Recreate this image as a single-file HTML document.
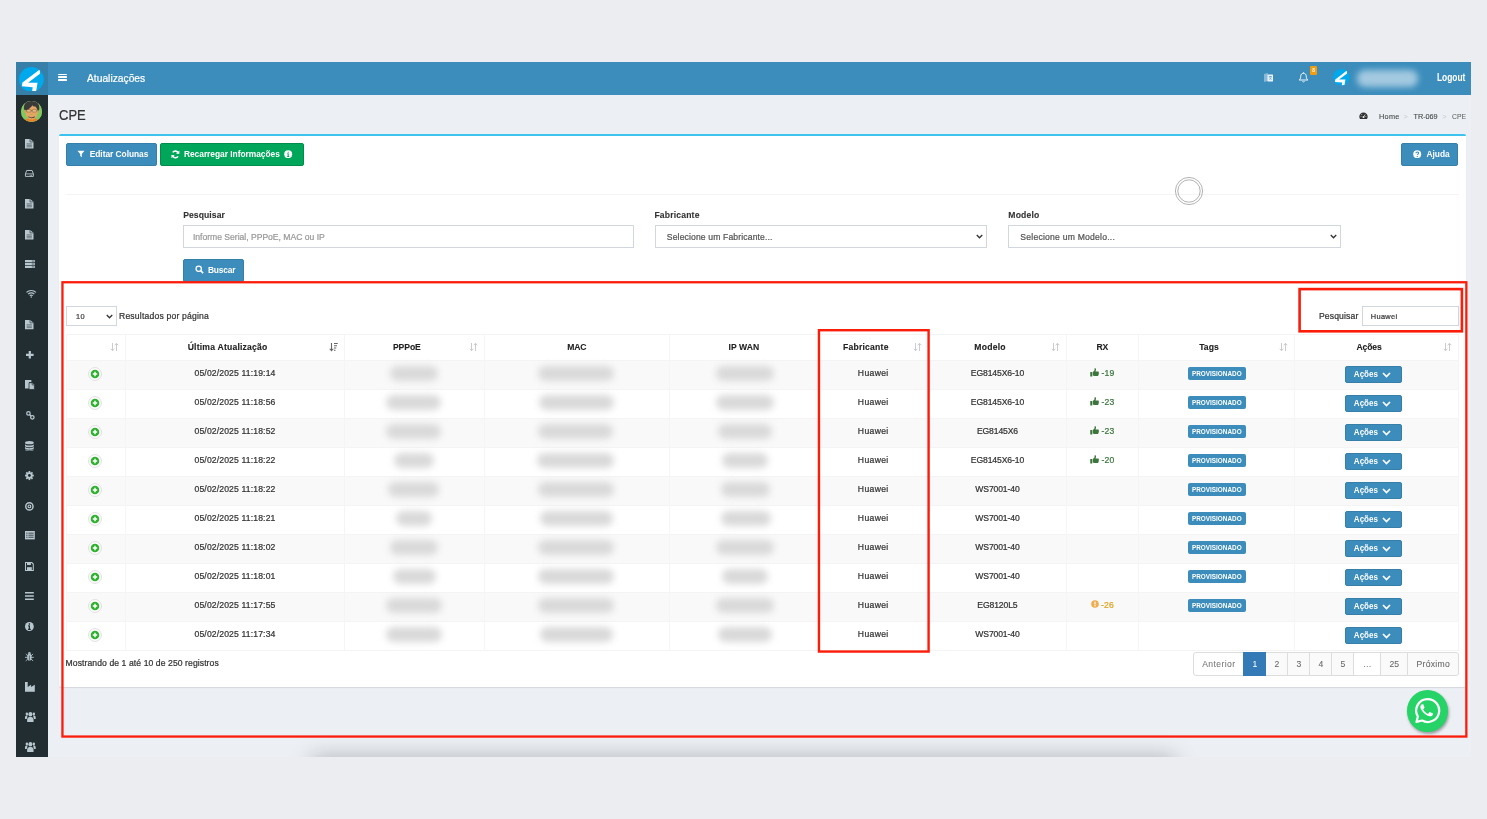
<!DOCTYPE html>
<html lang="pt-br"><head><meta charset="utf-8"><title>CPE</title>
<style>
*{box-sizing:border-box}
html,body{margin:0;padding:0;background:#ebedf1}
body{width:1487px;height:819px;overflow:hidden;position:relative;background:#ebedf1;font-family:"Liberation Sans",sans-serif;font-size:8.6px;color:#333}
.abs{position:absolute}
.t{white-space:nowrap;-webkit-text-stroke:0.22px currentColor}
.btn .t,.logout .t,.badge .t,.abtn .t,.pb.act .t{-webkit-text-stroke:0}
.th .t,.lbl .t{-webkit-text-stroke:0.1px currentColor}
.pb .t{-webkit-text-stroke:0.06px currentColor}
#page{position:absolute;left:16px;top:62px;width:1455px;height:695px;background:#ecf0f5;overflow:hidden;will-change:transform}
#o{position:absolute;left:-16px;top:-62px;width:1487px;height:819px}
#shadow{position:absolute;left:313px;top:758px;width:861px;height:30px;box-shadow:0 0 22px 1px rgba(0,0,0,.26);background:#ddd}
#hdr{position:absolute;left:16px;top:62px;width:1455px;height:32.7px;background:#3c8dbc}
#logo{position:absolute;left:16px;top:62px;width:32px;height:32.7px;background:#367fa9}
#logo svg{position:absolute;left:3px;top:4.7px}
#side{position:absolute;left:16px;top:94.7px;width:32px;height:662px;background:#222d32}
.sic{position:absolute;line-height:0}
#avatar{position:absolute;left:20.5px;top:101.4px;width:21.2px;height:20.8px;border-radius:50%;overflow:hidden;background:#8cc152;line-height:0}
.htitle{position:absolute;left:87px;top:72px;-webkit-text-stroke:0.25px #fff;color:#fff;font-size:11.2px;line-height:13px;white-space:nowrap}
.burger{position:absolute;left:58.3px;top:73.6px;width:9px;height:8px}
.burger i{position:absolute;left:0;width:9px;height:1.7px;background:#fff;border-radius:.4px}
.logout{position:absolute;left:1436.5px;top:72.2px;color:#fff;font-size:10px;font-weight:bold;line-height:12px;white-space:nowrap}
h1{position:absolute;left:58.6px;top:105.5px;margin:0;font-weight:normal;font-size:15.3px;line-height:18px;color:#333;white-space:nowrap}
.bc .t{-webkit-text-stroke:0.08px currentColor}
.bc{position:absolute;top:112px;font-size:7.3px;line-height:10px;color:#444;white-space:nowrap}
#box{position:absolute;left:59.3px;top:134.2px;width:1406.7px;height:552.5px;background:#fff;border-top:2px solid #3cc3ee;border-radius:2px;box-shadow:0 1px 1px rgba(0,0,0,.1)}
.btn{position:absolute;height:23px;border-radius:2px;color:#fff;font-weight:bold;font-size:8.4px;line-height:21.8px;white-space:nowrap;border:1px solid #367fa9;background:#3c8dbc}
.btn.green{background:#00a65a;border-color:#008d4c}
.btn svg{vertical-align:middle;position:relative;top:-0.6px}
.hr{position:absolute;left:66px;top:193.5px;width:1392.6px;height:1px;background:#f4f4f4}
.lbl{position:absolute;top:209.2px;font-weight:bold;font-size:8.6px;line-height:12px;color:#333;white-space:nowrap}
.inp{position:absolute;top:224.7px;height:23.4px;border:1px solid #d2d6de;background:#fff;font-size:8.6px;line-height:23.2px;color:#555;white-space:nowrap}
.inp svg{position:absolute;right:2.8px;top:8.4px}
#dt{position:absolute;left:66px;top:334px;width:1392.6px;height:318px}
.th{position:absolute;top:0;height:26.3px;text-align:center;font-weight:bold;line-height:27.2px;white-space:nowrap;color:#222}
.sorti{position:absolute;right:6.4px;top:8px;line-height:0}
.tr{position:absolute;left:0;width:1392.6px;height:29px;border-top:1px solid #f4f4f4}
.tr.odd{background:#f9f9f9}
.td{position:absolute;top:0;height:28px;text-align:center;line-height:24.6px;white-space:nowrap;color:#333}
.vl{position:absolute;top:0;width:1px;height:316.5px;background:#f5f5f5}
.hl{position:absolute;left:0;width:1392.6px;height:1px;background:#f4f4f4}
.blob{position:absolute;top:4.8px;height:15.2px;border-radius:8px;background:#d9d9d9;filter:blur(3.8px)}
.badge{display:inline-block;vertical-align:top;margin-top:6px;height:13.2px;line-height:14px;padding:0 4.2px;border-radius:2px;background:#3c8dbc;color:#fff;font-weight:bold;font-size:6.9px;position:relative;left:0.6px}
.abtn{display:inline-block;vertical-align:top;margin-top:5px;width:57px;height:16.9px;line-height:15.3px;text-align:left;padding-left:7.6px;border-radius:2px;background:#3c8dbc;border:1px solid #367fa9;color:#fff;font-weight:bold;font-size:8.6px;position:relative;left:-2.6px}
.abtn svg{vertical-align:middle;position:relative;top:-0.4px}
.gap{display:inline-block;width:2.4px}
.gap2{display:inline-block;width:3.8px}
.rx svg{vertical-align:middle;position:relative;top:-2px}
.rx.g{color:#3c763d}
.rx.w{color:#e0a21c}
.pg{display:inline-block;vertical-align:top;margin-top:6.3px;line-height:0;position:relative;left:-0.3px;top:-0.6px}
.pb{position:absolute;top:0;height:23.6px;border:1px solid #ddd;background:#fafafa;color:#666;text-align:center;line-height:22.6px;font-size:8.6px}
.pb.act{background:#337ab7;border-color:#337ab7;color:#fff;z-index:2}
.pb.dis{background:#fff;color:#777}
.pb.first{border-radius:3px 0 0 3px}
.pb.last{border-radius:0 3px 3px 0}
.red{position:absolute;border:2.4px solid #fb1d0b;pointer-events:none}
</style></head>
<body>
<div id="page"><div id="o">
  <div id="shadow"></div>
  <div id="hdr"></div>
  <div id="logo"><svg width="24.8" height="24.8" viewBox="0 0 100 100" style=""><clipPath id="lc1"><circle cx="50" cy="50" r="50"/></clipPath><circle cx="50" cy="50" r="50" fill="#00a8ec"/><path clip-path="url(#lc1)" d="M83.8 9.7 L13.8 62.8 L11.4 77.6 L55.2 82 L52.6 101 L69.3 97 L74.8 63.8 L36.5 64 L84.5 27.6 Z" fill="#fff"/></svg></div>
  <div class="burger"><i style="top:0.2px"></i><i style="top:2.9px"></i><i style="top:5.6px"></i></div>
  <div class="htitle"><span class="t" style="display:inline-block;transform:scaleX(0.9174);transform-origin:left center;margin-right:-5.24px;">Atualizações</span></div>
  <div class="abs" style="left:1262.5px;top:71.7px;line-height:0"><svg width="11" height="11" viewBox="0 0 22 22" style=""><path d="M2 4l8-2v16l-8 2z" fill="#d7e6f1" opacity=".5"/><rect x="9" y="5" width="11" height="14" rx="1" fill="#eaf3f9"/><path d="M11.500 9h6M14.500 8v1.200M12.500 15c2.500-1.500 3.800-3.500 4.200-6M13 11c1 2 2.500 3.200 4.500 4" stroke="#3c8dbc" stroke-width="1.200" fill="none"/></svg></div>
  <div class="abs" style="left:1297.6px;top:71.9px;line-height:0"><svg width="11" height="11" viewBox="0 0 22 22" style=""><path d="M11 2.600c-3.600 0-5.600 2.800-5.600 6.200 0 4.200-1.400 5.800-3 7.200h17.200c-1.600-1.400-3-3-3-7.200 0-3.400-2-6.200-5.600-6.200z" fill="none" stroke="#fff" stroke-width="1.900" stroke-linejoin="round"/><path d="M8.800 18.200a2.300 2.300 0 0 0 4.400 0" fill="none" stroke="#fff" stroke-width="1.500"/><path d="M11 0.800v2" stroke="#fff" stroke-width="1.800"/></svg></div>
  <div class="abs" style="left:1310px;top:66px;width:7.4px;height:8.7px;border-radius:1.2px;background:#f39c12;color:#fff;font-size:4.8px;font-weight:bold;line-height:9.4px;text-align:center">8</div>
  <div class="abs" style="left:1333px;top:69px;line-height:0"><svg width="16.6" height="16.6" viewBox="0 0 100 100" style=""><clipPath id="lc2"><circle cx="50" cy="50" r="50"/></clipPath><circle cx="50" cy="50" r="50" fill="#00a8ec"/><path clip-path="url(#lc2)" d="M83.8 9.7 L13.8 62.8 L11.4 77.6 L55.2 82 L52.6 101 L69.3 97 L74.8 63.8 L36.5 64 L84.5 27.6 Z" fill="#fff"/></svg></div>
  <div class="abs" style="left:1357px;top:70.2px;width:61px;height:16.6px;border-radius:8px;background:#a3c9e0;filter:blur(3px)"></div>
  <div class="logout"><span class="t" style="display:inline-block;transform:scaleX(0.8384);transform-origin:left center;margin-right:-5.48px;">Logout</span></div>

  <div id="side"></div>
  <div id="avatar"><svg width="21.2" height="20.8" viewBox="0 0 40 40" style=""><rect width="40" height="40" fill="#80c860"/><path d="M5 40c1-5 6-7.500 15-7.500s14 2.500 15 7.500z" fill="#e8832a"/><ellipse cx="8.500" cy="20" rx="2.200" ry="3.200" fill="#d99a5c"/><ellipse cx="31.500" cy="20" rx="2.200" ry="3.200" fill="#d99a5c"/><path d="M8.500 17c0-8 5-12 11.500-12s11.500 4 11.500 12v5c0 8-5 13.500-11.500 13.500s-11.500-5.500-11.500-13.500z" fill="#e2a665"/><path d="M5.500 17c-2-10.500 4.500-18 14.500-18s16.500 7.500 14.500 18c-1 1.200-2 2-2.500 2-1-4-3.500-7.500-5.500-9-1.500 1-3.500.5-4.500-2-2 3.500-7.500 6-9.500 11-1.500 0-3.500-.5-5-2z" fill="#3b3a3a"/><rect x="10.500" y="16.800" width="8.200" height="4.200" rx="0.800" fill="#f0c896" stroke="#7a5530" stroke-width="1"/><rect x="21.300" y="16.800" width="8.200" height="4.200" rx="0.800" fill="#f0c896" stroke="#7a5530" stroke-width="1"/><path d="M18.700 18.300h2.600" stroke="#7a5530" stroke-width="1"/><path d="M14.500 29.500c2 2.800 9 2.800 11 0l.8 1.500c-2.500 3-10 3-12.600 0z" fill="#3b3a3a"/><ellipse cx="20" cy="26" rx="1.600" ry="1" fill="#cf935a"/></svg></div>
<div class="sic" style="left:25.4px;top:139.1px;width:8.5px;height:9.5px"><svg width="8.5" height="9.5" viewBox="2.5 0.5 11 15" preserveAspectRatio="none" style="overflow:visible"><path d="M2.5 0.5h6.6l4.4 4.4v10.600h-11z" fill="#b8c7ce"/><path d="M9 0.5v4.600h4.500" fill="none" stroke="#222d32" stroke-width="0.9"/><path d="M4.600 8.200h6.800M4.600 10.500h6.800M4.600 12.800h6.800" stroke="#222d32" stroke-width="0.9" opacity=".8"/></svg></div>
<div class="sic" style="left:25.4px;top:170.3px;width:8.8px;height:6.9px"><svg width="8.8" height="6.9" viewBox="0.2 2.7 15.6 11.1" preserveAspectRatio="none" style="overflow:visible"><path d="M3.2 3.5h9.6l2.2 5.5v4h-14v-4z" fill="none" stroke="#b8c7ce" stroke-width="1.6" stroke-linejoin="round"/><path d="M1 9h14" stroke="#b8c7ce" stroke-width="1.4"/><circle cx="11.8" cy="11.2" r="0.9" fill="#b8c7ce"/><circle cx="9.3" cy="11.2" r="0.9" fill="#b8c7ce"/></svg></div>
<div class="sic" style="left:25.4px;top:199.3px;width:8.5px;height:9.5px"><svg width="8.5" height="9.5" viewBox="2.5 0.5 11 15" preserveAspectRatio="none" style="overflow:visible"><path d="M2.5 0.5h6.6l4.4 4.4v10.600h-11z" fill="#b8c7ce"/><path d="M9 0.5v4.600h4.500" fill="none" stroke="#222d32" stroke-width="0.9"/><path d="M4.600 8.200h6.800M4.600 10.500h6.800M4.600 12.800h6.800" stroke="#222d32" stroke-width="0.9" opacity=".8"/></svg></div>
<div class="sic" style="left:25.4px;top:229.5px;width:8.5px;height:9.5px"><svg width="8.5" height="9.5" viewBox="2.5 0.5 11 15" preserveAspectRatio="none" style="overflow:visible"><path d="M2.5 0.5h6.6l4.4 4.4v10.600h-11z" fill="#b8c7ce"/><path d="M9 0.5v4.600h4.500" fill="none" stroke="#222d32" stroke-width="0.9"/><path d="M4.600 8.200h6.800M4.600 10.500h6.800M4.600 12.800h6.800" stroke="#222d32" stroke-width="0.9" opacity=".8"/></svg></div>
<div class="sic" style="left:25.4px;top:260.0px;width:9.8px;height:8.0px"><svg width="9.8" height="8.0" viewBox="0.5 1.5 15 13" preserveAspectRatio="none" style="overflow:visible"><rect x="0.5" y="1.5" width="15" height="3.6" fill="#b8c7ce"/><rect x="0.5" y="6.2" width="15" height="3.6" fill="#b8c7ce"/><rect x="0.5" y="10.9" width="15" height="3.6" fill="#b8c7ce"/><path d="M11 3.3h3M11 8h3M11 12.7h3" stroke="#222d32" stroke-width="1.1"/></svg></div>
<div class="sic" style="left:25.8px;top:290.3px;width:10.5px;height:7.8px"><svg width="10.5" height="7.8" viewBox="0 2.4 16 12.4" preserveAspectRatio="none" style="overflow:visible"><path d="M0.8 6.2a10.2 10.2 0 0 1 14.4 0" fill="none" stroke="#b8c7ce" stroke-width="1.9"/><path d="M3.3 8.9a6.6 6.6 0 0 1 9.4 0" fill="none" stroke="#b8c7ce" stroke-width="1.9"/><path d="M5.8 11.4a3.1 3.1 0 0 1 4.4 0" fill="none" stroke="#b8c7ce" stroke-width="1.9"/><circle cx="8" cy="13.6" r="1.2" fill="#b8c7ce"/></svg></div>
<div class="sic" style="left:25.4px;top:319.9px;width:8.5px;height:9.3px"><svg width="8.5" height="9.3" viewBox="2.5 0.5 11 15" preserveAspectRatio="none" style="overflow:visible"><path d="M2.5 0.5h6.6l4.4 4.4v10.600h-11z" fill="#b8c7ce"/><path d="M9 0.5v4.600h4.500" fill="none" stroke="#222d32" stroke-width="0.9"/><path d="M4.600 8.200h6.800M4.600 10.500h6.800M4.600 12.800h6.800" stroke="#222d32" stroke-width="0.9" opacity=".8"/></svg></div>
<div class="sic" style="left:25.8px;top:351.1px;width:7.6px;height:7.6px"><svg width="7.6" height="7.6" viewBox="2.5 2.5 11 11" preserveAspectRatio="none" style="overflow:visible"><path d="M8 2.5v11M2.5 8h11" stroke="#b8c7ce" stroke-width="3.2"/></svg></div>
<div class="sic" style="left:25.4px;top:380.0px;width:9.8px;height:9.8px"><svg width="9.8" height="9.8" viewBox="1 1.5 14.6 14.5" preserveAspectRatio="none" style="overflow:visible"><path d="M1 1.5h9.5v3H7v9.5H1z" fill="#b8c7ce"/><path d="M7 5.5h5l3 3v7H7z" fill="#b8c7ce" stroke="#222d32" stroke-width="1.1"/><path d="M11.6 5.8v3h3" fill="none" stroke="#222d32" stroke-width="0.9"/></svg></div>
<div class="sic" style="left:25.8px;top:410.6px;width:8.8px;height:8.8px"><svg width="8.8" height="8.8" viewBox="1.2 1.2 13.6 13.6" preserveAspectRatio="none" style="overflow:visible"><circle cx="5" cy="5" r="2.7" fill="none" stroke="#b8c7ce" stroke-width="1.9"/><circle cx="11" cy="11" r="2.7" fill="none" stroke="#b8c7ce" stroke-width="1.9"/><path d="M6.6 6.6l2.8 2.8" stroke="#b8c7ce" stroke-width="1.9"/></svg></div>
<div class="sic" style="left:25.4px;top:440.8px;width:8.8px;height:10.1px"><svg width="8.8" height="10.1" viewBox="2 0.8 12 14.6" preserveAspectRatio="none" style="overflow:visible"><ellipse cx="8" cy="3.2" rx="6" ry="2.4" fill="#b8c7ce"/><path d="M2 5.2c0 3 12 3 12 0v2.4c0 3-12 3-12 0z" fill="#b8c7ce"/><path d="M2 8.9c0 3 12 3 12 0v2.4c0 3-12 3-12 0z" fill="#b8c7ce"/><path d="M2 12.5c0 3 12 3 12 0v0.6c0 3-12 3-12 0z" fill="#b8c7ce"/></svg></div>
<div class="sic" style="left:25.4px;top:471.1px;width:8.8px;height:9.1px"><svg width="8.8" height="9.1" viewBox="0.8 0.8 14.4 14.4" preserveAspectRatio="none" style="overflow:visible"><rect x="6.6" y="0.8" width="2.8" height="14.4" fill="#b8c7ce" transform="rotate(0 8 8)"/><rect x="6.6" y="0.8" width="2.8" height="14.4" fill="#b8c7ce" transform="rotate(45 8 8)"/><rect x="6.6" y="0.8" width="2.8" height="14.4" fill="#b8c7ce" transform="rotate(90 8 8)"/><rect x="6.6" y="0.8" width="2.8" height="14.4" fill="#b8c7ce" transform="rotate(135 8 8)"/><circle cx="8" cy="8" r="5.2" fill="#b8c7ce"/><circle cx="8" cy="8" r="2.3" fill="#222d32"/></svg></div>
<div class="sic" style="left:25.4px;top:501.7px;width:8.8px;height:8.8px"><svg width="8.8" height="8.8" viewBox="1.2 1.2 13.6 13.6" preserveAspectRatio="none" style="overflow:visible"><circle cx="8" cy="8" r="5.600" fill="none" stroke="#b8c7ce" stroke-width="2.300"/><circle cx="8" cy="8" r="2.100" fill="none" stroke="#b8c7ce" stroke-width="1.800"/></svg></div>
<div class="sic" style="left:25.4px;top:531.0px;width:9.8px;height:8.4px"><svg width="9.8" height="8.4" viewBox="0.8 1.8 14.4 12.4" preserveAspectRatio="none" style="overflow:visible"><rect x="0.8" y="1.8" width="14.4" height="12.4" fill="#b8c7ce"/><path d="M2.5 5h2M5.8 5h7.7M2.5 8h2M5.8 8h7.7M2.5 11h2M5.8 11h7.7" stroke="#222d32" stroke-width="1.2"/></svg></div>
<div class="sic" style="left:25.4px;top:561.8px;width:8.8px;height:9.1px"><svg width="8.8" height="9.1" viewBox="0.65 0.65 14.7 14.7" preserveAspectRatio="none" style="overflow:visible"><path d="M1.5 1.5h10.5l2.5 2.5v10.5h-13z" fill="none" stroke="#b8c7ce" stroke-width="1.7"/><rect x="4" y="2" width="6.5" height="3.6" fill="#b8c7ce"/><rect x="4" y="9" width="8" height="5" fill="#b8c7ce"/></svg></div>
<div class="sic" style="left:25.4px;top:592.1px;width:8.8px;height:8.1px"><svg width="8.8" height="8.1" viewBox="1 2 14 12" preserveAspectRatio="none" style="overflow:visible"><path d="M1 3.2h14M1 8h14M1 12.8h14" stroke="#b8c7ce" stroke-width="2.4"/></svg></div>
<div class="sic" style="left:25.4px;top:622.0px;width:8.8px;height:9.0px"><svg width="8.8" height="9.0" viewBox="1 1 14 14" preserveAspectRatio="none" style="overflow:visible"><circle cx="8" cy="8" r="7" fill="#b8c7ce"/><path d="M8 3v2.2M8 6.6v6.2M6 6.9h2M5.8 12.6h4.4" stroke="#222d32" stroke-width="2"/></svg></div>
<div class="sic" style="left:25.4px;top:652.0px;width:8.8px;height:9.3px"><svg width="8.8" height="9.3" viewBox="0.8 1.6 14.4 13.4" preserveAspectRatio="none" style="overflow:visible"><ellipse cx="8" cy="9.3" rx="3.6" ry="5" fill="#b8c7ce"/><path d="M5.4 4.2a2.6 2.6 0 0 1 5.2 0z" fill="#b8c7ce"/><path d="M0.8 9.3h14.4M2 4.5l3.4 2.6M14 4.5l-3.4 2.6M2 14.5l3.4-2.8M14 14.5l-3.4-2.8" stroke="#b8c7ce" stroke-width="1.3"/><path d="M8 6.5v7.5" stroke="#222d32" stroke-width="0.9"/></svg></div>
<div class="sic" style="left:25.4px;top:681.8px;width:9.8px;height:9.8px"><svg width="9.8" height="9.8" viewBox="0.5 1 14.5 14.5" preserveAspectRatio="none" style="overflow:visible"><path d="M0.5 1h4v7.5l5-3.5v3.5l5.5-3.5v10.5h-14.5z" fill="#b8c7ce"/></svg></div>
<div class="sic" style="left:25.4px;top:712.1px;width:10.7px;height:10.0px"><svg width="10.7" height="10.0" viewBox="0 1.7 16 13.1" preserveAspectRatio="none" style="overflow:visible"><circle cx="8" cy="4.6" r="2.9" fill="#b8c7ce"/><path d="M3.2 14.8v-3.3a3.3 3.3 0 0 1 3.3-3.3h3a3.3 3.3 0 0 1 3.3 3.3v3.3z" fill="#b8c7ce"/><circle cx="2.8" cy="4.3" r="1.9" fill="#b8c7ce"/><circle cx="13.2" cy="4.3" r="1.9" fill="#b8c7ce"/><path d="M0 11v-2.3a2.3 2.3 0 0 1 2.3-2.3h1.6l-1.3 4.6zM16 11v-2.3a2.3 2.3 0 0 0-2.3-2.3h-1.6l1.3 4.6z" fill="#b8c7ce"/></svg></div>
<div class="sic" style="left:25.4px;top:742.2px;width:10.7px;height:10.0px"><svg width="10.7" height="10.0" viewBox="0 1.7 16 13.1" preserveAspectRatio="none" style="overflow:visible"><circle cx="8" cy="4.6" r="2.9" fill="#b8c7ce"/><path d="M3.2 14.8v-3.3a3.3 3.3 0 0 1 3.3-3.3h3a3.3 3.3 0 0 1 3.3 3.3v3.3z" fill="#b8c7ce"/><circle cx="2.8" cy="4.3" r="1.9" fill="#b8c7ce"/><circle cx="13.2" cy="4.3" r="1.9" fill="#b8c7ce"/><path d="M0 11v-2.3a2.3 2.3 0 0 1 2.3-2.3h1.6l-1.3 4.6zM16 11v-2.3a2.3 2.3 0 0 0-2.3-2.3h-1.6l1.3 4.6z" fill="#b8c7ce"/></svg></div>
  <h1><span class="t" style="display:inline-block;transform:scaleX(0.8489);transform-origin:left center;margin-right:-4.75px;">CPE</span></h1>
  <div class="abs" style="left:1359.3px;top:112.4px;line-height:0"><svg width="9" height="7.4" viewBox="0 0 18 15" style=""><path d="M9 1a8.500 8.500 0 0 0-8.500 8.500c0 2 .7 3.600 1.500 4.500h14c.8-.9 1.500-2.500 1.500-4.500A8.500 8.500 0 0 0 9 1z" fill="#333"/><circle cx="9" cy="10" r="2" fill="#ecf0f5"/><path d="M9 10l3.500-5" stroke="#ecf0f5" stroke-width="1.400"/><circle cx="4" cy="9" r="1" fill="#ecf0f5"/><circle cx="14" cy="9" r="1" fill="#ecf0f5"/><circle cx="5.600" cy="5" r="1" fill="#ecf0f5"/></svg></div>
  <div class="bc" style="left:1379px"><span class="t" style="letter-spacing:0.308px;">Home</span></div>
  <div class="bc" style="left:1403.5px;color:#c6c9cf">&gt;</div>
  <div class="bc" style="left:1413.6px"><span class="t" style="letter-spacing:-0.074px;">TR-069</span></div>
  <div class="bc" style="left:1442.2px;color:#c6c9cf">&gt;</div>
  <div class="bc" style="left:1451.6px;color:#666"><span class="t" style="display:inline-block;transform:scaleX(0.9324);transform-origin:left center;margin-right:-1.02px;">CPE</span></div>

  <div id="box"></div>
  <div class="btn" style="left:65.8px;top:143px;width:91.3px;padding-left:10.3px"><svg width="8" height="8" viewBox="0 0 16 16" style=""><path d="M1 1.500h14l-5.400 6.300v6.700l-3.200-2.300V7.800z" fill="#fff"/></svg><i class="gap" style="width:4.6px"></i><span class="t" style="letter-spacing:-0.029px;">Editar Colunas</span></div>
  <div class="btn green" style="left:159.9px;top:143px;width:144px;padding-left:9.9px"><svg width="8.8" height="8.8" viewBox="0 0 16 16" style=""><path d="M13.300 6.200A5.600 5.600 0 0 0 3.200 4.400M2.700 9.800a5.600 5.600 0 0 0 10.100 1.800" fill="none" stroke="#fff" stroke-width="2.900"/><path d="M15.200 1v5.900H9.300zM0.800 15V9.100h5.900z" fill="#fff"/></svg><i class="gap" style="width:4.4px"></i><span class="t" style="letter-spacing:-0.025px;">Recarregar Informações</span><i class="gap" style="width:4.6px"></i><svg width="8.4" height="8.4" viewBox="0 0 16 16" style=""><circle cx="8" cy="8" r="7.600" fill="#fff"/><path d="M8 3.200v2M8 6.800v5.800M6.300 7.200H8M6 12.400h4" stroke="#00a65a" stroke-width="2"/></svg></div>
  <div class="btn" style="left:1401.3px;top:143px;width:57.2px;padding-left:11.2px"><svg width="8.4" height="8.4" viewBox="0 0 16 16" style=""><circle cx="8" cy="8" r="7.600" fill="#fff"/><path d="M5.600 6.200c0-3.200 5-3.200 5-.2 0 1.800-2.400 1.900-2.400 3.700" fill="none" stroke="#3c8dbc" stroke-width="2"/><circle cx="8.200" cy="12.200" r="1.200" fill="#3c8dbc"/></svg><i class="gap" style="width:4.6px"></i><span class="t" style="letter-spacing:0.007px;">Ajuda</span></div>
  <div class="hr"></div>
  <div class="abs" style="left:1174px;top:175.6px;line-height:0"><svg width="30" height="30" viewBox="0 0 30 30" style=""><circle cx="15" cy="15" r="13.6" fill="none" stroke="#666" stroke-width="0.5"/><circle cx="15" cy="15" r="11.2" fill="none" stroke="#666" stroke-width="0.5"/></svg></div>

  <div class="lbl" style="left:183.2px"><span class="t" style="letter-spacing:0.078px;">Pesquisar</span></div>
  <div class="inp" style="left:183.3px;width:450.3px;padding-left:8.6px;color:#999"><span class="t" style="letter-spacing:-0.013px;">Informe Serial, PPPoE, MAC ou IP</span></div>
  <div class="lbl" style="left:654.4px"><span class="t" style="letter-spacing:0.173px;">Fabricante</span></div>
  <div class="inp" style="left:654.5px;width:332.2px;padding-left:11.3px"><span class="t" style="letter-spacing:0.137px;">Selecione um Fabricante...</span><svg width="7" height="5" viewBox="0 0 14 10" style=""><path d="M1.5 2l5.5 5.5L12.5 2" fill="none" stroke="#333" stroke-width="2.6"/></svg></div>
  <div class="lbl" style="left:1008.3px"><span class="t" style="letter-spacing:0.187px;">Modelo</span></div>
  <div class="inp" style="left:1007.5px;width:333.2px;padding-left:11.8px"><span class="t" style="letter-spacing:0.222px;">Selecione um Modelo...</span><svg width="7" height="5" viewBox="0 0 14 10" style=""><path d="M1.5 2l5.5 5.5L12.5 2" fill="none" stroke="#333" stroke-width="2.6"/></svg></div>
  <div class="btn" style="left:183.3px;top:258.5px;width:61px;padding-left:11px"><svg width="9" height="9" viewBox="0 0 18 18" style=""><circle cx="7.400" cy="7.400" r="5.300" fill="none" stroke="#fff" stroke-width="2.500"/><path d="M11.300 11.300l5 5" stroke="#fff" stroke-width="3"/></svg><i class="gap" style="width:3.6px"></i><span class="t" style="letter-spacing:-0.134px;">Buscar</span></div>

  <div class="inp" style="left:66.1px;top:305.5px;width:50.7px;height:20.6px;line-height:19px;padding-left:9px;font-size:7.4px;color:#444"><span class="t" style="letter-spacing:0.233px;">10</span><svg style="position:absolute;right:3.2px;top:7.2px" width="7" height="5" viewBox="0 0 14 10" style=""><path d="M1.5 2l5.5 5.5L12.5 2" fill="none" stroke="#333" stroke-width="2.6"/></svg></div>
  <div class="abs" style="left:119px;top:309.5px;line-height:12px;white-space:nowrap;color:#333"><span class="t" style="letter-spacing:0.190px;">Resultados por página</span></div>
  <div class="abs" style="left:1319px;top:309.5px;line-height:12px;white-space:nowrap;color:#333"><span class="t" style="letter-spacing:0.131px;">Pesquisar</span></div>
  <div class="inp" style="left:1362.3px;top:305.7px;width:96.6px;height:20.2px;line-height:19.6px;padding-left:7.4px;font-size:7.4px;color:#3a3a3a"><span class="t" style="letter-spacing:0.374px;">Huawei</span></div>

  <div id="dt">
    <div class="hl" style="top:0"></div>
    <div class="th" style="left:0.0px;width:59.5px;padding-right:14.8px;"><span class="sorti"><svg width="9" height="10" viewBox="0 0 18 20" style=""><path d="M5 2v15M1.5 13.5L5 17.5 8.5 13.5M13 18V3M9.5 6.5L13 2.5 16.5 6.5" fill="none" stroke="#cbcbcb" stroke-width="2"/></svg></span></div><div class="th" style="left:59.5px;width:219.0px;padding-right:14.8px;"><span class="t" style="letter-spacing:0.211px;">Última Atualização</span><span class="sorti"><svg width="9" height="10" viewBox="0 0 18 20" style=""><path d="M5 2v15M1.5 13.5L5 17.5 8.5 13.5" fill="none" stroke="#666" stroke-width="2.2"/><path d="M10 3h7.5M10 7.5h6M10 12h4.500M10 16.5h3" stroke="#666" stroke-width="2.4"/></svg></span></div><div class="th" style="left:278.5px;width:139.5px;padding-right:14.8px;"><span class="t" style="letter-spacing:-0.077px;">PPPoE</span><span class="sorti"><svg width="9" height="10" viewBox="0 0 18 20" style=""><path d="M5 2v15M1.5 13.5L5 17.5 8.5 13.5M13 18V3M9.5 6.5L13 2.5 16.5 6.5" fill="none" stroke="#cbcbcb" stroke-width="2"/></svg></span></div><div class="th" style="left:418.0px;width:185.7px;"><span class="t" style="letter-spacing:-0.193px;">MAC</span></div><div class="th" style="left:603.7px;width:148.3px;"><span class="t" style="letter-spacing:0.066px;">IP WAN</span></div><div class="th" style="left:752.0px;width:110.5px;padding-right:14.8px;"><span class="t" style="letter-spacing:0.213px;">Fabricante</span><span class="sorti"><svg width="9" height="10" viewBox="0 0 18 20" style=""><path d="M5 2v15M1.5 13.5L5 17.5 8.5 13.5M13 18V3M9.5 6.5L13 2.5 16.5 6.5" fill="none" stroke="#cbcbcb" stroke-width="2"/></svg></span></div><div class="th" style="left:862.5px;width:137.9px;padding-right:14.8px;"><span class="t" style="letter-spacing:0.220px;">Modelo</span><span class="sorti"><svg width="9" height="10" viewBox="0 0 18 20" style=""><path d="M5 2v15M1.5 13.5L5 17.5 8.5 13.5M13 18V3M9.5 6.5L13 2.5 16.5 6.5" fill="none" stroke="#cbcbcb" stroke-width="2"/></svg></span></div><div class="th" style="left:1000.4px;width:72.0px;"><span class="t" style="letter-spacing:0.023px;">RX</span></div><div class="th" style="left:1072.4px;width:156.0px;padding-right:14.8px;"><span class="t" style="letter-spacing:0.045px;">Tags</span><span class="sorti"><svg width="9" height="10" viewBox="0 0 18 20" style=""><path d="M5 2v15M1.5 13.5L5 17.5 8.5 13.5M13 18V3M9.5 6.5L13 2.5 16.5 6.5" fill="none" stroke="#cbcbcb" stroke-width="2"/></svg></span></div><div class="th" style="left:1228.4px;width:164.1px;padding-right:14.8px;"><span class="t" style="letter-spacing:-0.119px;">Ações</span><span class="sorti"><svg width="9" height="10" viewBox="0 0 18 20" style=""><path d="M5 2v15M1.5 13.5L5 17.5 8.5 13.5M13 18V3M9.5 6.5L13 2.5 16.5 6.5" fill="none" stroke="#cbcbcb" stroke-width="2"/></svg></span></div>
    <div class="tr odd" style="top:26.3px"><div class="td" style="left:0.0px;width:59.5px;"><span class="pg"><svg width="14" height="14" viewBox="0 0 28 28" style=""><circle cx="14" cy="14" r="12.8" fill="#fff" stroke="#d4d4d4" stroke-width="1.500"/><circle cx="14" cy="14" r="8.600" fill="#2fb12f"/><path d="M14 9.600v8.800M9.600 14h8.800" stroke="#fff" stroke-width="2.800"/></svg></span></div><div class="td" style="left:59.5px;width:219.0px;"><span class="t" style="letter-spacing:0.146px;">05/02/2025 11:19:14</span></div><div class="blob" style="left:324.0px;width:48.0px"></div><div class="blob" style="left:472.0px;width:76.0px"></div><div class="blob" style="left:650.0px;width:58.0px"></div><div class="td" style="left:752.0px;width:110.5px;"><span class="t" style="letter-spacing:0.355px;">Huawei</span></div><div class="td" style="left:862.5px;width:137.9px;"><span class="t" style="letter-spacing:-0.115px;">EG8145X6-10</span></div><div class="td" style="left:1000.4px;width:72.0px;"><span class="rx g"><svg width="9" height="9" viewBox="0 0 18 18" style=""><rect x="0.5" y="8" width="4" height="9" fill="#3c763d"/><path d="M5.5 8.5l3.6-4.2V1.2c0-1 3-1 3 1.2 0 2-1 3.6-1 4.4h5.2c1.6 0 1.8 1.8 1 2.4.8.6.6 2-.2 2.4.6.6.4 1.9-.4 2.3.4.9-.2 2.1-1.4 2.1H9c-1.6 0-2.4-.8-3.5-.8z" fill="#3c763d"/></svg><i class="gap"></i><span class="t" style="letter-spacing:0.226px;">-19</span></span></div><div class="td" style="left:1072.4px;width:156.0px;"><span class="badge"><span class="t" style="display:inline-block;transform:scaleX(0.9252);transform-origin:center center;margin:0 -2.01px;">PROVISIONADO</span></span></div><div class="td" style="left:1228.4px;width:164.1px;"><span class="abtn"><span class="t" style="display:inline-block;transform:scaleX(0.9342);transform-origin:center center;margin:0 -0.85px;">Ações</span><i class="gap2"></i><svg width="9" height="6" viewBox="0 0 18 12" style=""><path d="M2 2l7 7 7-7" fill="none" stroke="#fff" stroke-width="3.4"/></svg></span></div></div>
<div class="tr" style="top:55.3px"><div class="td" style="left:0.0px;width:59.5px;"><span class="pg"><svg width="14" height="14" viewBox="0 0 28 28" style=""><circle cx="14" cy="14" r="12.8" fill="#fff" stroke="#d4d4d4" stroke-width="1.500"/><circle cx="14" cy="14" r="8.600" fill="#2fb12f"/><path d="M14 9.600v8.800M9.600 14h8.800" stroke="#fff" stroke-width="2.800"/></svg></span></div><div class="td" style="left:59.5px;width:219.0px;"><span class="t" style="letter-spacing:0.146px;">05/02/2025 11:18:56</span></div><div class="blob" style="left:320.0px;width:55.0px"></div><div class="blob" style="left:473.0px;width:75.0px"></div><div class="blob" style="left:650.0px;width:58.0px"></div><div class="td" style="left:752.0px;width:110.5px;"><span class="t" style="letter-spacing:0.355px;">Huawei</span></div><div class="td" style="left:862.5px;width:137.9px;"><span class="t" style="letter-spacing:-0.115px;">EG8145X6-10</span></div><div class="td" style="left:1000.4px;width:72.0px;"><span class="rx g"><svg width="9" height="9" viewBox="0 0 18 18" style=""><rect x="0.5" y="8" width="4" height="9" fill="#3c763d"/><path d="M5.5 8.5l3.6-4.2V1.2c0-1 3-1 3 1.2 0 2-1 3.6-1 4.4h5.2c1.6 0 1.8 1.8 1 2.4.8.6.6 2-.2 2.4.6.6.4 1.9-.4 2.3.4.9-.2 2.1-1.4 2.1H9c-1.6 0-2.4-.8-3.5-.8z" fill="#3c763d"/></svg><i class="gap"></i><span class="t" style="letter-spacing:0.226px;">-23</span></span></div><div class="td" style="left:1072.4px;width:156.0px;"><span class="badge"><span class="t" style="display:inline-block;transform:scaleX(0.9252);transform-origin:center center;margin:0 -2.01px;">PROVISIONADO</span></span></div><div class="td" style="left:1228.4px;width:164.1px;"><span class="abtn"><span class="t" style="display:inline-block;transform:scaleX(0.9342);transform-origin:center center;margin:0 -0.85px;">Ações</span><i class="gap2"></i><svg width="9" height="6" viewBox="0 0 18 12" style=""><path d="M2 2l7 7 7-7" fill="none" stroke="#fff" stroke-width="3.4"/></svg></span></div></div>
<div class="tr odd" style="top:84.3px"><div class="td" style="left:0.0px;width:59.5px;"><span class="pg"><svg width="14" height="14" viewBox="0 0 28 28" style=""><circle cx="14" cy="14" r="12.8" fill="#fff" stroke="#d4d4d4" stroke-width="1.500"/><circle cx="14" cy="14" r="8.600" fill="#2fb12f"/><path d="M14 9.600v8.800M9.600 14h8.800" stroke="#fff" stroke-width="2.800"/></svg></span></div><div class="td" style="left:59.5px;width:219.0px;"><span class="t" style="letter-spacing:0.146px;">05/02/2025 11:18:52</span></div><div class="blob" style="left:320.0px;width:55.0px"></div><div class="blob" style="left:472.0px;width:75.0px"></div><div class="blob" style="left:652.0px;width:54.0px"></div><div class="td" style="left:752.0px;width:110.5px;"><span class="t" style="letter-spacing:0.355px;">Huawei</span></div><div class="td" style="left:862.5px;width:137.9px;"><span class="t" style="letter-spacing:-0.115px;">EG8145X6</span></div><div class="td" style="left:1000.4px;width:72.0px;"><span class="rx g"><svg width="9" height="9" viewBox="0 0 18 18" style=""><rect x="0.5" y="8" width="4" height="9" fill="#3c763d"/><path d="M5.5 8.5l3.6-4.2V1.2c0-1 3-1 3 1.2 0 2-1 3.6-1 4.4h5.2c1.6 0 1.8 1.8 1 2.4.8.6.6 2-.2 2.4.6.6.4 1.9-.4 2.3.4.9-.2 2.1-1.4 2.1H9c-1.6 0-2.4-.8-3.5-.8z" fill="#3c763d"/></svg><i class="gap"></i><span class="t" style="letter-spacing:0.226px;">-23</span></span></div><div class="td" style="left:1072.4px;width:156.0px;"><span class="badge"><span class="t" style="display:inline-block;transform:scaleX(0.9252);transform-origin:center center;margin:0 -2.01px;">PROVISIONADO</span></span></div><div class="td" style="left:1228.4px;width:164.1px;"><span class="abtn"><span class="t" style="display:inline-block;transform:scaleX(0.9342);transform-origin:center center;margin:0 -0.85px;">Ações</span><i class="gap2"></i><svg width="9" height="6" viewBox="0 0 18 12" style=""><path d="M2 2l7 7 7-7" fill="none" stroke="#fff" stroke-width="3.4"/></svg></span></div></div>
<div class="tr" style="top:113.3px"><div class="td" style="left:0.0px;width:59.5px;"><span class="pg"><svg width="14" height="14" viewBox="0 0 28 28" style=""><circle cx="14" cy="14" r="12.8" fill="#fff" stroke="#d4d4d4" stroke-width="1.500"/><circle cx="14" cy="14" r="8.600" fill="#2fb12f"/><path d="M14 9.600v8.800M9.600 14h8.800" stroke="#fff" stroke-width="2.800"/></svg></span></div><div class="td" style="left:59.5px;width:219.0px;"><span class="t" style="letter-spacing:0.146px;">05/02/2025 11:18:22</span></div><div class="blob" style="left:328.0px;width:40.0px"></div><div class="blob" style="left:471.0px;width:77.0px"></div><div class="blob" style="left:656.0px;width:46.0px"></div><div class="td" style="left:752.0px;width:110.5px;"><span class="t" style="letter-spacing:0.355px;">Huawei</span></div><div class="td" style="left:862.5px;width:137.9px;"><span class="t" style="letter-spacing:-0.115px;">EG8145X6-10</span></div><div class="td" style="left:1000.4px;width:72.0px;"><span class="rx g"><svg width="9" height="9" viewBox="0 0 18 18" style=""><rect x="0.5" y="8" width="4" height="9" fill="#3c763d"/><path d="M5.5 8.5l3.6-4.2V1.2c0-1 3-1 3 1.2 0 2-1 3.6-1 4.4h5.2c1.6 0 1.8 1.8 1 2.4.8.6.6 2-.2 2.4.6.6.4 1.9-.4 2.3.4.9-.2 2.1-1.4 2.1H9c-1.6 0-2.4-.8-3.5-.8z" fill="#3c763d"/></svg><i class="gap"></i><span class="t" style="letter-spacing:0.226px;">-20</span></span></div><div class="td" style="left:1072.4px;width:156.0px;"><span class="badge"><span class="t" style="display:inline-block;transform:scaleX(0.9252);transform-origin:center center;margin:0 -2.01px;">PROVISIONADO</span></span></div><div class="td" style="left:1228.4px;width:164.1px;"><span class="abtn"><span class="t" style="display:inline-block;transform:scaleX(0.9342);transform-origin:center center;margin:0 -0.85px;">Ações</span><i class="gap2"></i><svg width="9" height="6" viewBox="0 0 18 12" style=""><path d="M2 2l7 7 7-7" fill="none" stroke="#fff" stroke-width="3.4"/></svg></span></div></div>
<div class="tr odd" style="top:142.3px"><div class="td" style="left:0.0px;width:59.5px;"><span class="pg"><svg width="14" height="14" viewBox="0 0 28 28" style=""><circle cx="14" cy="14" r="12.8" fill="#fff" stroke="#d4d4d4" stroke-width="1.500"/><circle cx="14" cy="14" r="8.600" fill="#2fb12f"/><path d="M14 9.600v8.800M9.600 14h8.800" stroke="#fff" stroke-width="2.800"/></svg></span></div><div class="td" style="left:59.5px;width:219.0px;"><span class="t" style="letter-spacing:0.146px;">05/02/2025 11:18:22</span></div><div class="blob" style="left:322.0px;width:51.0px"></div><div class="blob" style="left:472.0px;width:76.0px"></div><div class="blob" style="left:655.0px;width:49.0px"></div><div class="td" style="left:752.0px;width:110.5px;"><span class="t" style="letter-spacing:0.355px;">Huawei</span></div><div class="td" style="left:862.5px;width:137.9px;"><span class="t" style="letter-spacing:-0.115px;">WS7001-40</span></div><div class="td" style="left:1000.4px;width:72.0px;"></div><div class="td" style="left:1072.4px;width:156.0px;"><span class="badge"><span class="t" style="display:inline-block;transform:scaleX(0.9252);transform-origin:center center;margin:0 -2.01px;">PROVISIONADO</span></span></div><div class="td" style="left:1228.4px;width:164.1px;"><span class="abtn"><span class="t" style="display:inline-block;transform:scaleX(0.9342);transform-origin:center center;margin:0 -0.85px;">Ações</span><i class="gap2"></i><svg width="9" height="6" viewBox="0 0 18 12" style=""><path d="M2 2l7 7 7-7" fill="none" stroke="#fff" stroke-width="3.4"/></svg></span></div></div>
<div class="tr" style="top:171.3px"><div class="td" style="left:0.0px;width:59.5px;"><span class="pg"><svg width="14" height="14" viewBox="0 0 28 28" style=""><circle cx="14" cy="14" r="12.8" fill="#fff" stroke="#d4d4d4" stroke-width="1.500"/><circle cx="14" cy="14" r="8.600" fill="#2fb12f"/><path d="M14 9.600v8.800M9.600 14h8.800" stroke="#fff" stroke-width="2.800"/></svg></span></div><div class="td" style="left:59.5px;width:219.0px;"><span class="t" style="letter-spacing:0.146px;">05/02/2025 11:18:21</span></div><div class="blob" style="left:330.0px;width:36.0px"></div><div class="blob" style="left:474.0px;width:73.0px"></div><div class="blob" style="left:655.0px;width:50.0px"></div><div class="td" style="left:752.0px;width:110.5px;"><span class="t" style="letter-spacing:0.355px;">Huawei</span></div><div class="td" style="left:862.5px;width:137.9px;"><span class="t" style="letter-spacing:-0.115px;">WS7001-40</span></div><div class="td" style="left:1000.4px;width:72.0px;"></div><div class="td" style="left:1072.4px;width:156.0px;"><span class="badge"><span class="t" style="display:inline-block;transform:scaleX(0.9252);transform-origin:center center;margin:0 -2.01px;">PROVISIONADO</span></span></div><div class="td" style="left:1228.4px;width:164.1px;"><span class="abtn"><span class="t" style="display:inline-block;transform:scaleX(0.9342);transform-origin:center center;margin:0 -0.85px;">Ações</span><i class="gap2"></i><svg width="9" height="6" viewBox="0 0 18 12" style=""><path d="M2 2l7 7 7-7" fill="none" stroke="#fff" stroke-width="3.4"/></svg></span></div></div>
<div class="tr odd" style="top:200.3px"><div class="td" style="left:0.0px;width:59.5px;"><span class="pg"><svg width="14" height="14" viewBox="0 0 28 28" style=""><circle cx="14" cy="14" r="12.8" fill="#fff" stroke="#d4d4d4" stroke-width="1.500"/><circle cx="14" cy="14" r="8.600" fill="#2fb12f"/><path d="M14 9.600v8.800M9.600 14h8.800" stroke="#fff" stroke-width="2.800"/></svg></span></div><div class="td" style="left:59.5px;width:219.0px;"><span class="t" style="letter-spacing:0.146px;">05/02/2025 11:18:02</span></div><div class="blob" style="left:324.0px;width:48.0px"></div><div class="blob" style="left:472.0px;width:76.0px"></div><div class="blob" style="left:650.0px;width:58.0px"></div><div class="td" style="left:752.0px;width:110.5px;"><span class="t" style="letter-spacing:0.355px;">Huawei</span></div><div class="td" style="left:862.5px;width:137.9px;"><span class="t" style="letter-spacing:-0.115px;">WS7001-40</span></div><div class="td" style="left:1000.4px;width:72.0px;"></div><div class="td" style="left:1072.4px;width:156.0px;"><span class="badge"><span class="t" style="display:inline-block;transform:scaleX(0.9252);transform-origin:center center;margin:0 -2.01px;">PROVISIONADO</span></span></div><div class="td" style="left:1228.4px;width:164.1px;"><span class="abtn"><span class="t" style="display:inline-block;transform:scaleX(0.9342);transform-origin:center center;margin:0 -0.85px;">Ações</span><i class="gap2"></i><svg width="9" height="6" viewBox="0 0 18 12" style=""><path d="M2 2l7 7 7-7" fill="none" stroke="#fff" stroke-width="3.4"/></svg></span></div></div>
<div class="tr" style="top:229.3px"><div class="td" style="left:0.0px;width:59.5px;"><span class="pg"><svg width="14" height="14" viewBox="0 0 28 28" style=""><circle cx="14" cy="14" r="12.8" fill="#fff" stroke="#d4d4d4" stroke-width="1.500"/><circle cx="14" cy="14" r="8.600" fill="#2fb12f"/><path d="M14 9.600v8.800M9.600 14h8.800" stroke="#fff" stroke-width="2.800"/></svg></span></div><div class="td" style="left:59.5px;width:219.0px;"><span class="t" style="letter-spacing:0.146px;">05/02/2025 11:18:01</span></div><div class="blob" style="left:327.0px;width:43.0px"></div><div class="blob" style="left:472.0px;width:76.0px"></div><div class="blob" style="left:656.0px;width:46.0px"></div><div class="td" style="left:752.0px;width:110.5px;"><span class="t" style="letter-spacing:0.355px;">Huawei</span></div><div class="td" style="left:862.5px;width:137.9px;"><span class="t" style="letter-spacing:-0.115px;">WS7001-40</span></div><div class="td" style="left:1000.4px;width:72.0px;"></div><div class="td" style="left:1072.4px;width:156.0px;"><span class="badge"><span class="t" style="display:inline-block;transform:scaleX(0.9252);transform-origin:center center;margin:0 -2.01px;">PROVISIONADO</span></span></div><div class="td" style="left:1228.4px;width:164.1px;"><span class="abtn"><span class="t" style="display:inline-block;transform:scaleX(0.9342);transform-origin:center center;margin:0 -0.85px;">Ações</span><i class="gap2"></i><svg width="9" height="6" viewBox="0 0 18 12" style=""><path d="M2 2l7 7 7-7" fill="none" stroke="#fff" stroke-width="3.4"/></svg></span></div></div>
<div class="tr odd" style="top:258.3px"><div class="td" style="left:0.0px;width:59.5px;"><span class="pg"><svg width="14" height="14" viewBox="0 0 28 28" style=""><circle cx="14" cy="14" r="12.8" fill="#fff" stroke="#d4d4d4" stroke-width="1.500"/><circle cx="14" cy="14" r="8.600" fill="#2fb12f"/><path d="M14 9.600v8.800M9.600 14h8.800" stroke="#fff" stroke-width="2.800"/></svg></span></div><div class="td" style="left:59.5px;width:219.0px;"><span class="t" style="letter-spacing:0.146px;">05/02/2025 11:17:55</span></div><div class="blob" style="left:320.0px;width:56.0px"></div><div class="blob" style="left:472.0px;width:76.0px"></div><div class="blob" style="left:650.0px;width:58.0px"></div><div class="td" style="left:752.0px;width:110.5px;"><span class="t" style="letter-spacing:0.355px;">Huawei</span></div><div class="td" style="left:862.5px;width:137.9px;"><span class="t" style="letter-spacing:-0.115px;">EG8120L5</span></div><div class="td" style="left:1000.4px;width:72.0px;"><span class="rx w"><svg width="8" height="8" viewBox="0 0 16 16" style=""><circle cx="8" cy="8" r="7.6" fill="#f0ad4e"/><path d="M8 3.4v5.4" stroke="#fff" stroke-width="2.4"/><circle cx="8" cy="11.6" r="1.4" fill="#fff"/></svg><i class="gap"></i><span class="t" style="letter-spacing:0.226px;">-26</span></span></div><div class="td" style="left:1072.4px;width:156.0px;"><span class="badge"><span class="t" style="display:inline-block;transform:scaleX(0.9252);transform-origin:center center;margin:0 -2.01px;">PROVISIONADO</span></span></div><div class="td" style="left:1228.4px;width:164.1px;"><span class="abtn"><span class="t" style="display:inline-block;transform:scaleX(0.9342);transform-origin:center center;margin:0 -0.85px;">Ações</span><i class="gap2"></i><svg width="9" height="6" viewBox="0 0 18 12" style=""><path d="M2 2l7 7 7-7" fill="none" stroke="#fff" stroke-width="3.4"/></svg></span></div></div>
<div class="tr" style="top:287.3px"><div class="td" style="left:0.0px;width:59.5px;"><span class="pg"><svg width="14" height="14" viewBox="0 0 28 28" style=""><circle cx="14" cy="14" r="12.8" fill="#fff" stroke="#d4d4d4" stroke-width="1.500"/><circle cx="14" cy="14" r="8.600" fill="#2fb12f"/><path d="M14 9.600v8.800M9.600 14h8.800" stroke="#fff" stroke-width="2.800"/></svg></span></div><div class="td" style="left:59.5px;width:219.0px;"><span class="t" style="letter-spacing:0.146px;">05/02/2025 11:17:34</span></div><div class="blob" style="left:320.0px;width:56.0px"></div><div class="blob" style="left:474.0px;width:73.0px"></div><div class="blob" style="left:652.0px;width:54.0px"></div><div class="td" style="left:752.0px;width:110.5px;"><span class="t" style="letter-spacing:0.355px;">Huawei</span></div><div class="td" style="left:862.5px;width:137.9px;"><span class="t" style="letter-spacing:-0.115px;">WS7001-40</span></div><div class="td" style="left:1000.4px;width:72.0px;"></div><div class="td" style="left:1072.4px;width:156.0px;"></div><div class="td" style="left:1228.4px;width:164.1px;"><span class="abtn"><span class="t" style="display:inline-block;transform:scaleX(0.9342);transform-origin:center center;margin:0 -0.85px;">Ações</span><i class="gap2"></i><svg width="9" height="6" viewBox="0 0 18 12" style=""><path d="M2 2l7 7 7-7" fill="none" stroke="#fff" stroke-width="3.4"/></svg></span></div></div>
    <div class="hl" style="top:316px"></div>
    <div class="vl" style="left:-0.5px"></div><div class="vl" style="left:59.0px"></div><div class="vl" style="left:278.0px"></div><div class="vl" style="left:417.5px"></div><div class="vl" style="left:603.2px"></div><div class="vl" style="left:751.5px"></div><div class="vl" style="left:862.0px"></div><div class="vl" style="left:999.9px"></div><div class="vl" style="left:1071.9px"></div><div class="vl" style="left:1227.9px"></div><div class="vl" style="left:1392.0px"></div>
  </div>
  <div class="abs" style="left:65.6px;top:657.1px;line-height:12px;white-space:nowrap;color:#333"><span class="t" style="letter-spacing:0.084px;">Mostrando de 1 até 10 de 250 registros</span></div>
  <div class="abs" id="pag" style="left:1193.3px;top:652.2px;width:266px;height:24px"><span class="pb dis first" style="left:0px;width:51px"><span class="t" style="letter-spacing:0.388px;">Anterior</span></span><span class="pb act" style="left:50px;width:23px"><span class="t" style="letter-spacing:0.000px;">1</span></span><span class="pb " style="left:72px;width:23px"><span class="t" style="letter-spacing:0.000px;">2</span></span><span class="pb " style="left:94px;width:23px"><span class="t" style="letter-spacing:0.000px;">3</span></span><span class="pb " style="left:116px;width:23px"><span class="t" style="letter-spacing:0.000px;">4</span></span><span class="pb " style="left:138px;width:23px"><span class="t" style="letter-spacing:0.000px;">5</span></span><span class="pb dis" style="left:160px;width:28px"><span class="t" style="letter-spacing:0.000px;">…</span></span><span class="pb " style="left:187px;width:28px"><span class="t" style="letter-spacing:0.000px;">25</span></span><span class="pb last" style="left:214px;width:52px"><span class="t" style="letter-spacing:0.296px;">Próximo</span></span></div>

  <div class="abs" style="left:1406.8px;top:690.2px;width:41.4px;height:41.4px;border-radius:50%;background:#25d366;box-shadow:1px 2px 3px rgba(0,0,0,.35);line-height:0"><svg width="41.4" height="41.4" viewBox="0 0 48 48" style=""><path d="M24 10.500a13.300 13.300 0 0 0-11.400 20.200L11 37l6.500-1.600A13.300 13.300 0 1 0 24 10.500z" fill="none" stroke="#fff" stroke-width="2.600" stroke-linejoin="round"/><path d="M19.300 17.500c-.5-1-1-.9-1.500-.9-1.400.2-2.500 1.700-2.300 3.500.4 3.400 5.200 9.300 10.600 10.400 1.800.3 3.500-.7 3.900-2.200.2-.7.100-1-.3-1.200l-2.800-1.400c-.5-.2-.8-.1-1.100.3l-1 1.300c-.3.300-.6.400-1 .2-2-.8-3.800-2.500-4.900-4.500-.2-.4-.1-.7.200-1l.9-1c.3-.4.300-.7.200-1z" fill="#fff"/></svg></div>

  <svg class="abs" style="left:0;top:0;pointer-events:none" width="1487" height="819" viewBox="0 0 1487 819" fill="none" stroke="#fc1c0a">
    <rect x="62.45" y="282.25" width="1403.9" height="454.3" stroke-width="2.3"/>
    <rect x="1299.6" y="289.1" width="162.3" height="42.2" stroke-width="2.6"/>
    <rect x="818.95" y="330.2" width="109.65" height="321.35" stroke-width="2.4"/>
  </svg>
</div></div>
</body></html>
